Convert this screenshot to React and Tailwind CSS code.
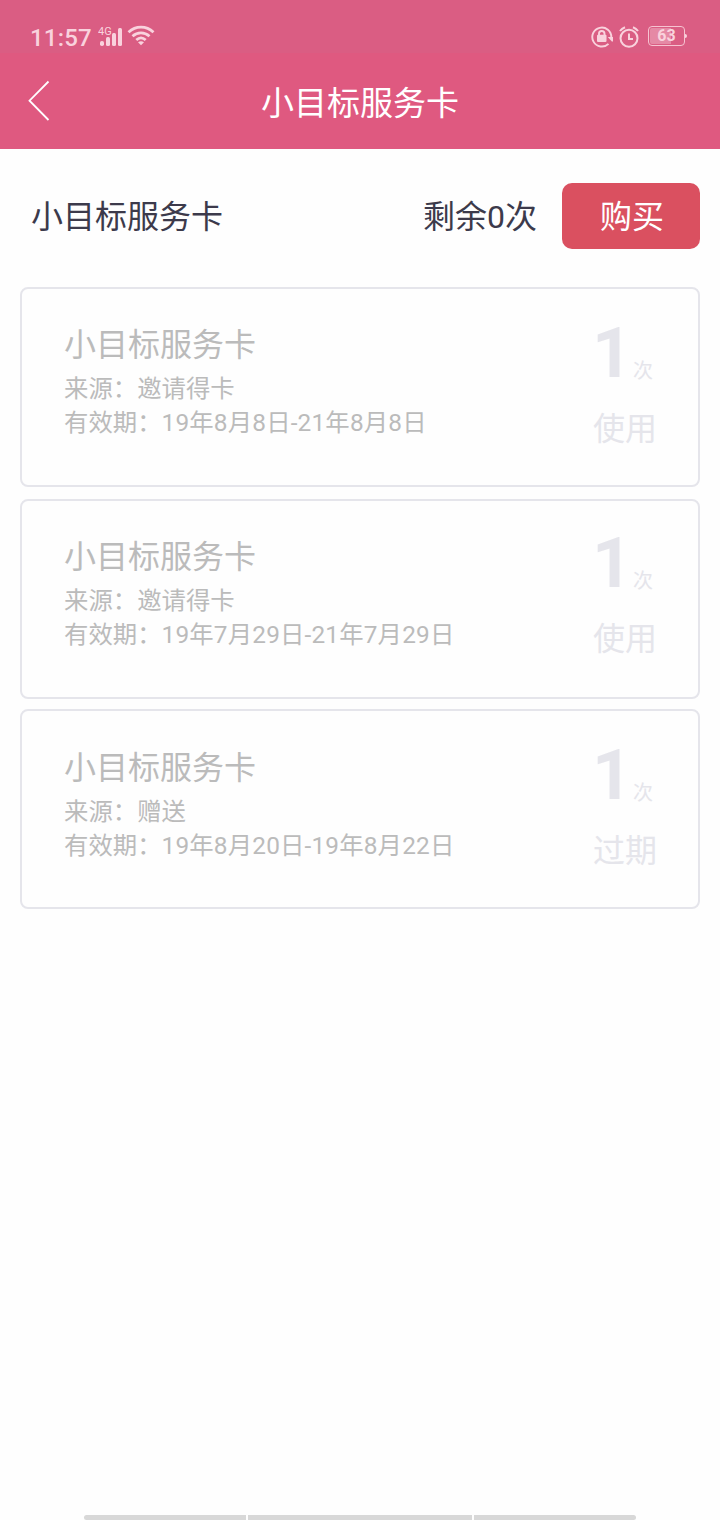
import clsx from 'clsx';

const cards = [
  {
    id: 1,
    title: '小目标服务卡',
    source: '邀请得卡',
    period: '19年8月8日-21年8月8日',
    count: 1,
    status: '使用',
    className: 'mb-3',
    bodyClass: 'pt-[33px]',
    countClass: 'pt-[29px]',
  },
  {
    id: 2,
    title: '小目标服务卡',
    source: '邀请得卡',
    period: '19年7月29日-21年7月29日',
    count: 1,
    status: '使用',
    className: 'mb-2.5',
    bodyClass: 'pt-[33px]',
    countClass: 'pt-[27px]',
  },
  {
    id: 3,
    title: '小目标服务卡',
    source: '赠送',
    period: '19年8月20日-19年8月22日',
    count: 1,
    status: '过期',
    bodyClass: 'pt-[34px]',
    countClass: 'pt-[29px]',
  },
];

function SignalIcon() {
  return (
    <svg width="26" height="24" viewBox="0 0 26 24" fill="currentColor">
      <text x="0" y="12" fontSize="11" fontFamily="Roboto, sans-serif">4G</text>
      <rect x="2" y="18" width="4" height="5" rx="1.8" />
      <rect x="8" y="14" width="4" height="9" rx="1.5" />
      <rect x="14" y="10" width="4" height="13" rx="1.5" />
      <rect x="20" y="5" width="4" height="18" rx="1.5" />
    </svg>
  );
}

function WifiIcon() {
  return (
    <svg width="28" height="22" viewBox="0 0 28 22" fill="none" stroke="currentColor" strokeWidth="2.8">
      <path d="M1.500 8.300C8.800 1.500 19.200 1.500 26.500 8.300" />
      <path d="M5.500 12.200C10.500 7.700 17.500 7.700 22.500 12.200" />
      <path d="M9.300 16C12.200 13.400 15.800 13.400 18.700 16" />
      <path d="M14 21.300L11 18.300Q14 16.200 17 18.300Z" fill="currentColor" stroke="none" />
    </svg>
  );
}

function RotationLockIcon() {
  return (
    <svg width="22" height="22" viewBox="0 0 22 22" fill="none" stroke="currentColor" strokeWidth="1.9">
      <path d="M17.500 17.800A9.500 9.500 0 1 1 20.300 11.500" />
      <path d="M16.800 11H22V15.500H20.800Z" fill="currentColor" stroke="none" />
      <rect x="6" y="8.800" width="9.500" height="7.200" rx="1" fill="currentColor" stroke="none" />
      <path d="M8 10V7.800a2.750 2.750 0 0 1 5.500 0V10" />
    </svg>
  );
}

function AlarmIcon() {
  return (
    <svg width="20" height="22" viewBox="0 0 20 22" fill="none" stroke="currentColor" strokeWidth="2">
      <circle cx="10" cy="12.300" r="8.500" />
      <path d="M10 7.500V13H14" />
      <path d="M1 5Q2.800 2.400 6 1.200M19 5Q17.200 2.400 14 1.200" />
    </svg>
  );
}

function StatusBar() {
  return (
    <div className="flex h-[53px] items-start justify-between bg-[#da5d83] pl-[30px] pr-[33px] text-[#f9d2dd]">
      <div className="flex pt-[23px]">
        <span className="w-[68px] text-2xl/[30px] font-medium tracking-[0.2px]">11:57</span>
        <SignalIcon />
        <span className="ml-[3px] pt-px"><WifiIcon /></span>
      </div>
      <div className="flex pt-[26px]">
        <RotationLockIcon />
        <span className="ml-1.5 mr-[9px]"><AlarmIcon /></span>
        <div className="flex h-5 w-[37px] items-center justify-center rounded-[4px] border border-[#f6c3d1] bg-linear-to-r from-[#e589a5] from-63% to-transparent to-63% bg-clip-content p-px text-base/4 font-bold">
          63
        </div>
        <span className="mt-2 h-[4px] w-[2px] rounded-r-sm bg-current" />
      </div>
    </div>
  );
}

function Header() {
  return (
    <div className="grid h-24 grid-cols-[1fr_auto_1fr] items-center bg-[#df5980] text-white">
      <svg className="ml-7" width="22" height="42" viewBox="0 0 22 42" fill="none" stroke="currentColor" strokeWidth="1.800">
        <path d="M20.500 1.500L1.500 20.700L20.500 40" />
      </svg>
      <h1 className="pt-[5px] text-[33px]/[48px]">小目标服务卡</h1>
    </div>
  );
}

function ServiceCard({ card }) {
  return (
    <div className={clsx('flex h-[200px] justify-between rounded-lg border-2 border-[#e5e5eb] pl-[42px] pr-[41px]', card.className)}>
      <div className={clsx('text-[24.4px]/[34px] text-[#bbb]', card.bodyClass)}>
        <h2 className="mb-1 text-[32px]/[46px]">{card.title}</h2>
        <p>来源：{card.source}</p>
        <p>有效期：<span className="tracking-[0.16px]">{card.period}</span></p>
      </div>
      <div className={clsx('w-16 text-[#e5e5eb]', card.countClass)}>
        <div className="flex items-baseline">
          <span className="-ml-px w-[41px] text-[70px]/[70px] font-bold">{card.count}</span>
          <span className="relative top-px text-[20px]/[28px]">次</span>
        </div>
        <p className="mt-[18px] text-[32px]/[46px]">{card.status}</p>
      </div>
    </div>
  );
}

export default function App() {
  return (
    <div className="flex h-[1520px] flex-col overflow-hidden bg-[#fefefe] font-['Roboto','Noto_Sans_CJK_SC',sans-serif]">
      <StatusBar />
      <Header />
      <div className="mt-[34px] flex h-[66px] items-center pl-[31px] pr-5 text-[32px]/[46px] text-[#3c3a4b]">
        <span className="flex-1 pt-0.5">小目标服务卡</span>
        <span className="mr-[25px] pt-px">剩余0次</span>
        <button className="h-[66px] w-[138px] rounded-[10px] bg-[#da5060] pl-0.5 pt-px text-white">购买</button>
      </div>
      <div className="mt-[38px] px-5">
        {cards.map((card) => (
          <ServiceCard key={card.id} card={card} />
        ))}
      </div>
      <div className="mt-auto flex h-[5px] gap-0.5 px-[84px]">
        <span className="w-[162px] rounded-l-full bg-[#d8d8d8]" />
        <span className="flex-1 bg-[#d8d8d8]" />
        <span className="w-[162px] rounded-r-full bg-[#d8d8d8]" />
      </div>
    </div>
  );
}
